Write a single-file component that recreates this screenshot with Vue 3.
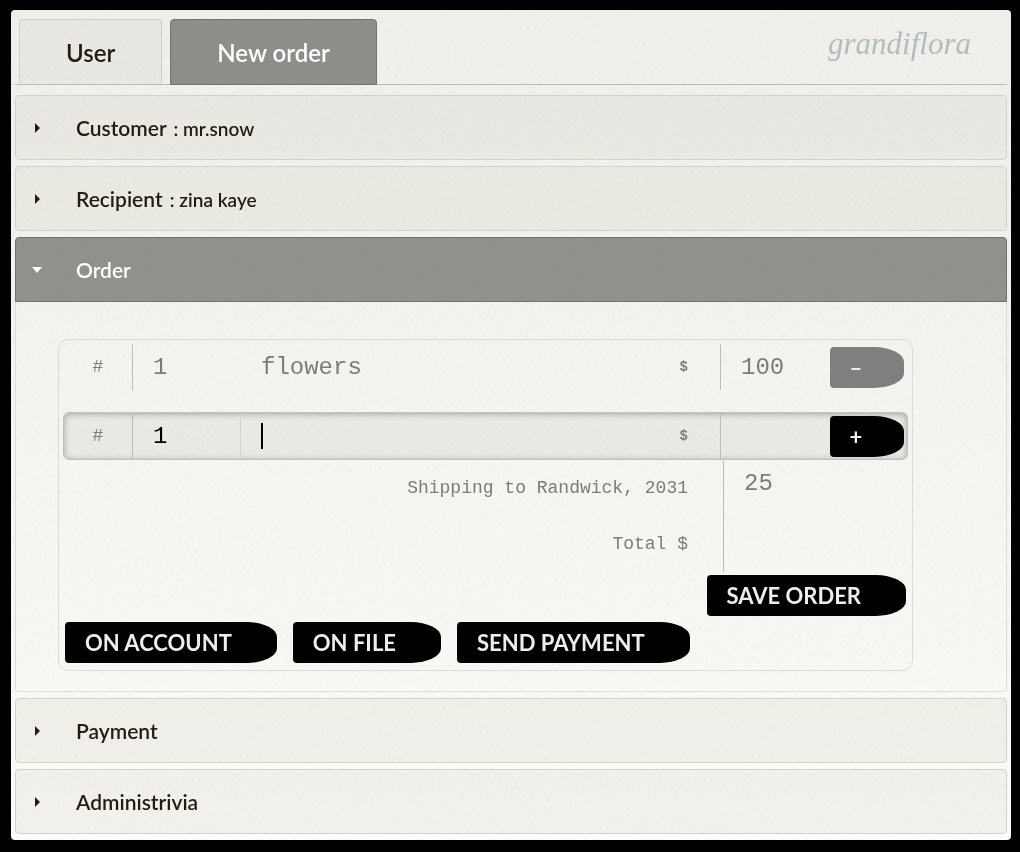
<script setup>
import { ref } from "vue";

const tabs = ref([
  { id: 1, name: "User" },
  { id: 2, name: "New order" },
]);
const currentTab = ref(2);
const openSection = ref("order");

const sections = ref([
  { id: "customer", title: "Customer", value: "mr.snow" },
  { id: "recipient", title: "Recipient", value: "zina kaye" },
  { id: "order", title: "Order" },
  { id: "payment", title: "Payment" },
  { id: "admin", title: "Administrivia" },
]);

const items = ref([{ id: 1, qty: "1", name: "flowers", price: "100" }]);
const newItem = ref({ qty: "1", name: "", price: "" });
const shipping = ref("25");
const total = ref("");

const addItem = () => {
  if (!newItem.value.name) return;
  items.value.push({ id: Date.now(), ...newItem.value });
  newItem.value = { qty: "1", name: "", price: "" };
};

const removeItem = (id) => {
  items.value = items.value.filter((item) => item.id !== id);
};

const toggle = (id) => {
  openSection.value = openSection.value === id ? "" : id;
};
</script>

<template>
  <main class="sheet">
    <header class="top">
      <nav class="tabs">
        <button
          v-for="tab in tabs"
          :key="tab.id"
          type="button"
          class="tab"
          :class="{ active: tab.id === currentTab }"
          @click="currentTab = tab.id"
        >
          {{ tab.name }}
        </button>
      </nav>
      <a href="#" class="logo">grandiflora</a>
    </header>

    <div class="accordion">
      <section v-for="section in sections" :key="section.id">
        <button
          type="button"
          class="bar"
          :class="{ open: section.id === openSection }"
          @click="toggle(section.id)"
        >
          <svg class="arrow" viewBox="0 0 12 12" aria-hidden="true">
            <path v-if="section.id === openSection" d="M1 3h10L6 9z" />
            <path v-else d="M4 1v10l5-5z" />
          </svg>
          <span class="title">
            {{ section.title }}
            <span v-if="section.value" class="value">: {{ section.value }}</span>
          </span>
        </button>

        <div v-if="section.id === 'order' && openSection === 'order'" class="content">
          <form class="order" @submit.prevent>
            <div v-for="item in items" :key="item.id" class="row">
              <label class="hash" :for="'qty' + item.id">#</label>
              <div class="cell line">
                <input :id="'qty' + item.id" v-model="item.qty" type="text" />
              </div>
              <div class="cell name">
                <input v-model="item.name" type="text" aria-label="Item" />
                <label class="dollar" :for="'price' + item.id">$</label>
              </div>
              <div class="cell line">
                <input :id="'price' + item.id" v-model="item.price" type="text" />
              </div>
              <button type="button" class="btn small muted" @click="removeItem(item.id)">–</button>
            </div>

            <div class="row current">
              <label class="hash" for="qty">#</label>
              <div class="cell line">
                <input id="qty" v-model="newItem.qty" type="text" />
              </div>
              <div class="cell name">
                <span class="caret"></span>
                <input v-model="newItem.name" type="text" aria-label="New item" />
                <label class="dollar" for="price">$</label>
              </div>
              <div class="cell line">
                <input id="price" v-model="newItem.price" type="text" />
              </div>
              <button type="button" class="btn small" @click="addItem">+</button>
            </div>

            <div class="summary">
              <label for="shipping">Shipping to Randwick, 2031</label>
              <div class="sum">
                <input id="shipping" v-model="shipping" type="text" />
              </div>
              <label for="total">Total $</label>
              <div class="sum">
                <input id="total" v-model="total" type="text" />
              </div>
            </div>

            <div class="save">
              <button type="submit" class="btn">SAVE ORDER</button>
            </div>
            <div class="actions">
              <button type="button" class="btn">ON ACCOUNT</button>
              <button type="button" class="btn">ON FILE</button>
              <button type="button" class="btn">SEND PAYMENT</button>
            </div>
          </form>
        </div>
      </section>
    </div>

    <!-- paper grain -->
    <svg class="grain" aria-hidden="true">
      <filter id="paper">
        <feTurbulence type="fractalNoise" baseFrequency="0.5 0.25" numOctaves="2" seed="4" />
        <feColorMatrix values="0 0 0 0 0.4  0 0 0 0 0.4  0 0 0 0 0.38  1.4 0 0 0 -0.6" />
      </filter>
      <rect width="100%" height="100%" filter="url(#paper)" />
    </svg>
  </main>
</template>

<style>
body {
  margin: 0;
  background: #000;
}
</style>

<style scoped>
.sheet {
  position: relative;
  margin: 10px 9px 11px 11px;
  padding: 0 4px 6px;
  border-radius: 4px;
  overflow: hidden;
  background: linear-gradient(#f0efec, #f3f3ef 40%, #f8f8f4 80%, #fdfdfa);
  font-family: Lato, "Open Sans", sans-serif;
  color: #221c14;
}

.grain {
  position: absolute;
  top: 0;
  left: 0;
  width: 100%;
  height: 100%;
  opacity: 0.1;
  mix-blend-mode: multiply;
  pointer-events: none;
}

button,
input {
  font-family: inherit;
  color: inherit;
  margin: 0;
  box-sizing: border-box;
}

button {
  cursor: pointer;
}

.top {
  display: flex;
  justify-content: space-between;
  padding: 9px 36px 0 4px;
  border-bottom: 1px solid #bfbdb6;
}

.tabs {
  display: flex;
  gap: 8px;
}

.tab {
  height: 66px;
  margin-bottom: -1px;
  padding: 0 46px;
  border: 1px solid #d0d0c9;
  border-bottom-color: #bfbdb6;
  border-radius: 4px 4px 0 0;
  background: #e9e8e3;
  font-size: 24px;
  font-weight: 600;
}

.tab.active {
  border-color: #74726d;
  background: #8f8e8b;
  color: #fff;
}

.logo {
  margin-top: 8px;
  font: italic 31px/34px "Liberation Serif", serif;
  color: #b3bdbe;
  text-decoration: none;
}

.accordion {
  display: flex;
  flex-direction: column;
  gap: 6px;
  margin-top: 10px;
}

.bar {
  display: flex;
  align-items: center;
  width: 100%;
  height: 65px;
  padding: 0 15px;
  border: 1px solid #d3d3cd;
  border-radius: 4px;
  background: rgba(217, 215, 203, 0.3);
  font-size: 21px;
  font-weight: 600;
  text-align: left;
}

.bar.open {
  border-color: #74726d;
  border-radius: 4px 4px 0 0;
  background: #92918e;
  color: #fff;
}

.arrow {
  width: 12px;
  height: 12px;
  margin-right: 33px;
  fill: currentColor;
}

.value {
  margin-left: 2px;
  font-size: 19px;
}

.content {
  padding: 37px 93px 20px 42px;
  border: 1px solid #dddcd7;
  border-top: 0;
  border-radius: 0 0 4px 4px;
}

.order {
  padding: 3px 4px 7px;
  border: 1px solid #dddcd7;
  border-radius: 10px;
  font-family: "Liberation Mono", monospace;
  color: #7c7c79;
}

.row {
  display: grid;
  grid-template-columns: 68px 108px 1fr 110px 77px;
  align-items: center;
  margin-bottom: 21px;
  border: 1px solid transparent;
}

.row.current {
  margin-bottom: 0;
  border-color: #c2c1bb;
  border-radius: 6px;
  background: #eae9e5;
  box-shadow: inset 0 1px 6px rgba(0, 0, 0, 0.3);
}

.hash {
  text-align: center;
  font-size: 18px;
}

.cell {
  display: flex;
  align-items: center;
  height: 46px;
  min-width: 0;
  padding-left: 20px;
  border-left: 1px solid transparent;
  box-sizing: border-box;
}

.cell.line {
  border-left-color: #bebdb8;
}

.current .name {
  border-left-color: #d3d2cd;
}

input {
  flex: 1;
  width: 100%;
  min-width: 0;
  padding: 0;
  border: 0;
  outline: 0;
  background: none;
  font-size: 24px;
}

.current input {
  color: #000;
}

.caret {
  width: 2px;
  height: 26px;
  background: #000;
}

.dollar {
  padding-right: 32px;
  font-size: 14px;
  font-weight: bold;
}

.btn {
  height: 41px;
  padding: 0 45px 0 20px;
  border: 0;
  border-radius: 4px 30px 30px 4px / 4px 15px 15px 4px;
  background: #000;
  color: #efeeeb;
  font-family: Lato, "Open Sans", sans-serif;
  font-size: 22px;
  font-weight: bold;
}

.btn.small {
  width: 74px;
  padding: 0 22px 0 0;
}

.btn.muted {
  background: #808080;
}

.summary {
  display: grid;
  grid-template-columns: 1fr 185px;
  text-align: right;
  font-size: 18px;
}

.summary label {
  padding: 16px 35px 0 0;
  line-height: 24px;
}

.sum {
  height: 56px;
  padding: 10px 0 0 20px;
  border-left: 1px solid #bebdb8;
  box-sizing: border-box;
}

.save {
  display: flex;
  justify-content: flex-end;
  margin: 3px 2px 6px;
}

.actions {
  display: flex;
  gap: 16px;
  padding-left: 2px;
}
</style>
